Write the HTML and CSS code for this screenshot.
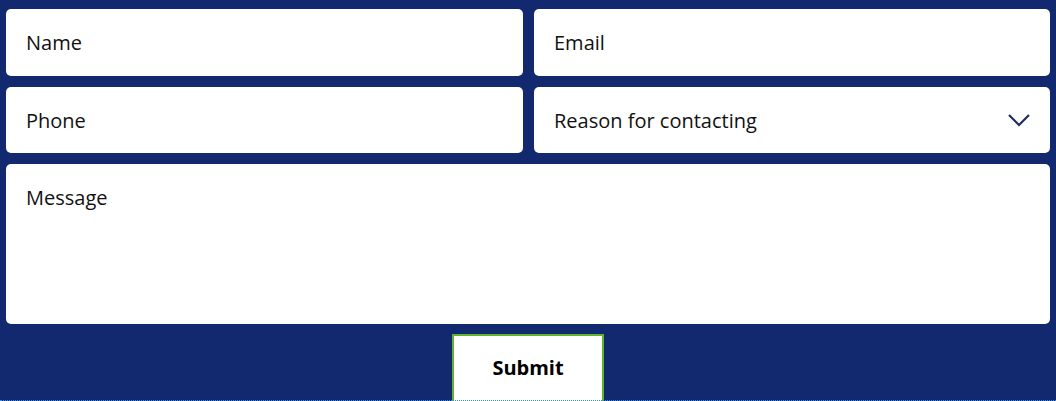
FILE: index.html
```html
<!DOCTYPE html>
<html>
<head>
<meta charset="utf-8">
<link rel="stylesheet" href="styles.css">
</head>
<body>
<div class="page">
  <form class="form">
    <div class="grid">
      <div class="field">Name</div>
      <div class="field">Email</div>
      <div class="field">Phone</div>
      <div class="field select">
        <span>Reason for contacting</span>
        <svg class="chev" width="24" height="14" viewBox="0 0 24 14"><path d="M2 2 L12 12 L22 2" fill="none" stroke="#1f2d5c" stroke-width="2.2"/></svg>
      </div>
      <div class="field message">Message</div>
    </div>
    <div class="actions">
      <button type="button" class="submit">Submit</button>
    </div>
  </form>
</div>
</body>
</html>
```
FILE: styles.css
```css
html, body {
  margin: 0;
  padding: 0;
}
body {
  background: #122970;
  font-family: "Open Sans", "Liberation Sans", sans-serif;
}
.page {
  position: relative;
  height: 401px;
  overflow: hidden;
  box-sizing: border-box;
  padding: 9px 6px 0 6px;
}
.page::after {
  content: "";
  position: absolute;
  left: 0;
  right: 0;
  bottom: 0;
  border-bottom: 1px dotted #2f8fe6;
}
.grid {
  display: grid;
  grid-template-columns: 517px 516px;
  grid-template-rows: 67px 66px 160px;
  column-gap: 11px;
  row-gap: 11px;
}
.field {
  background: #fff;
  border-radius: 5px;
  padding: 0 20px 0 20px;
  display: flex;
  align-items: center;
  font-size: 20px;
  color: #111;
}
.select {
  justify-content: space-between;
  padding-right: 19px;
}
.chev {
  display: block;
}
.message {
  grid-column: 1 / 3;
  align-items: flex-start;
  padding-top: 20px;
}
.actions {
  display: flex;
  justify-content: center;
  padding-top: 10px;
}
.submit {
  width: 152px;
  height: 70px;
  background: #fff;
  border: 2.5px solid #62b22f;
  border-radius: 0;
  font-family: "Open Sans", "Liberation Sans", sans-serif;
  font-weight: 700;
  font-size: 20px;
  color: #000;
  padding: 0;
  padding-bottom: 3px;
}
```
